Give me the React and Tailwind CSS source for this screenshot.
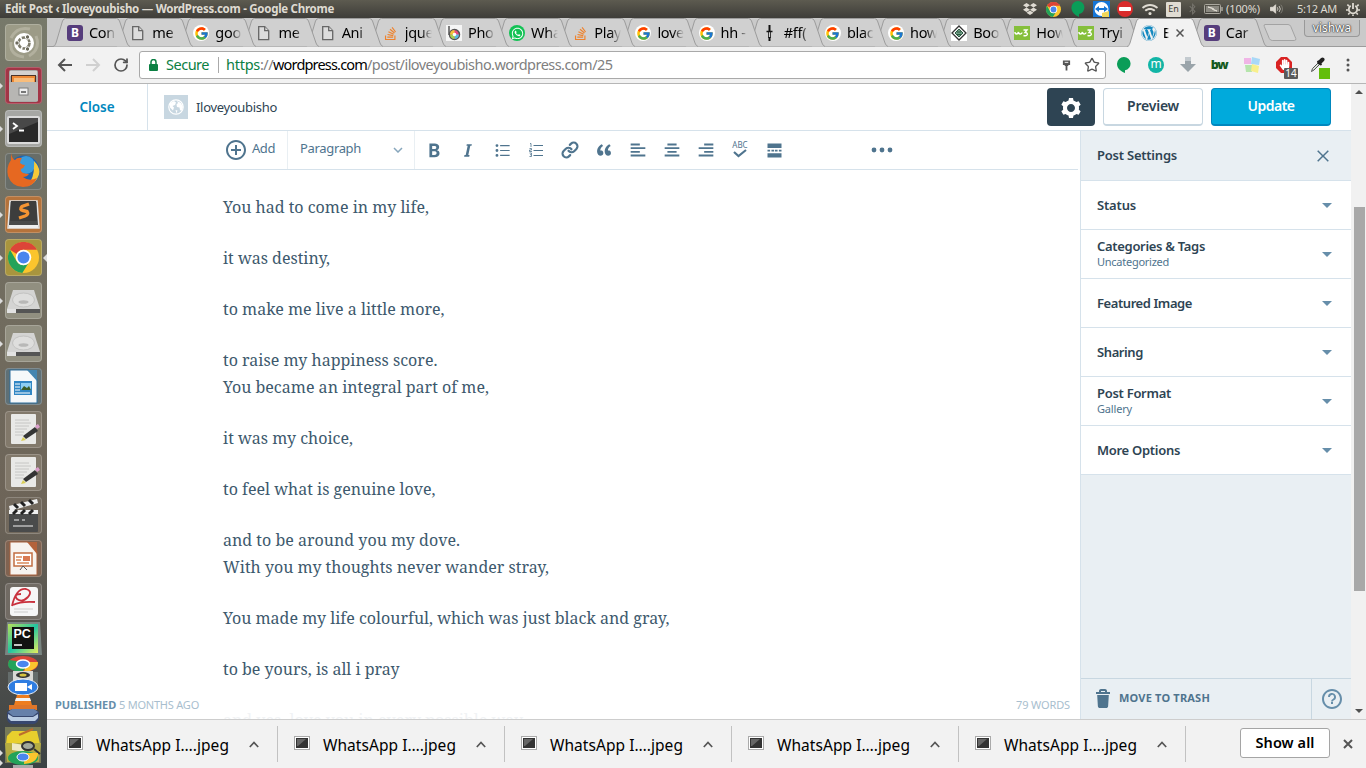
import React, { useLayoutEffect, useRef } from 'react';
import { FcGoogle } from 'react-icons/fc';
import { FaWhatsapp, FaWordpress, FaStackOverflow, FaDropbox, FaBluetoothB, FaHandPaper, FaWifi } from 'react-icons/fa';
import { Link, Star, RotateCw, Power } from 'lucide-react';

/* Text set to an exact advance width by adjusting its tracking. */
function Fit({ w, className = '', children }) {
  const ref = useRef(null);
  useLayoutEffect(() => {
    const el = ref.current;
    el.style.letterSpacing = '0px';
    const natural = el.getBoundingClientRect().width;
    el.style.letterSpacing = `${(w - natural) / el.textContent.length}px`;
  }, [w, children]);
  return (
    <span ref={ref} className={`inline-block shrink-0 whitespace-pre ${className}`}>
      {children}
    </span>
  );
}

function ChromeIcon({ className }) {
  return (
    <svg viewBox="0 0 32 32" className={className}>
      <circle cx="16" cy="16" r="16" fill="#fbc52d" />
      <path d="M2.1 8A16 16 0 0 1 29.900 8H16a8 8 0 0 0-7 4.500z" fill="#dc4438" />
      <path d="M2.1 8A16 16 0 0 0 14.800 32L21 22a8 8 0 0 1-12-2z" fill="#23a35a" />
      <circle cx="16" cy="16" r="8" fill="#fff" />
      <circle cx="16" cy="16" r="6.200" fill="#4a86ee" />
    </svg>
  );
}

/* ---------- system bar ---------- */

function SystemBar() {
  return (
    <div className="flex h-[18px] shrink-0 items-center bg-linear-to-b from-[#5d5b50] to-[#3e3d39] pl-[5px] text-[#dfdbd2]">
      <Fit w={329} className="text-[11.5px] leading-[18px] font-bold">Edit Post ‹ Iloveyoubisho — WordPress.com - Google Chrome</Fit>
      <div className="ml-auto flex h-full items-center">
        <FaDropbox className="h-[14px] w-[14px]" />
        <ChromeIcon className="ml-[9px] h-[15px] w-[15px]" />
        <svg viewBox="0 0 14 17" className="ml-[10px] h-[16px] w-[14px]"><path d="M7 0a7 7 0 0 1 1 13.900V17C3 15 0 11 0 7a7 7 0 0 1 7-7z" fill="#0a9d58" /></svg>
        <svg viewBox="0 0 17 16" className="ml-[8px] h-[16px] w-[17px]">
          <rect width="17" height="16" fill="#1676d6" />
          <circle cx="8.500" cy="8" r="7" fill="#fff" />
          <path d="M2 8l4-3v2h5V5l4 3-4 3V9H6v2z" fill="#1676d6" />
          <path d="M9 12l7-2v6H9z" fill="#f1d75a" />
        </svg>
        <svg viewBox="0 0 16 16" className="ml-[7px] h-[16px] w-[16px]"><circle cx="8" cy="8" r="8" fill="#d92b2b" /><rect x="2" y="6" width="12" height="4" rx="1" fill="#fff" /></svg>
        <FaWifi className="ml-[9px] h-[13px] w-[16px]" />
        <span className="ml-[8px] flex h-[15px] w-[15px] items-center justify-center rounded-[1px] bg-[#dfdbd2] text-[9px] text-[#3c3b37]">En</span>
        <FaBluetoothB className="ml-[7px] h-[12px] w-[9px] text-[#77756e]" />
        <svg viewBox="0 0 19 10" className="ml-[7px] h-[10px] w-[19px]" fill="none" stroke="#aaa79e">
          <rect x=".5" y=".5" width="16" height="9" rx="1" /><path d="M18 3v4" strokeWidth="1.500" /><rect x="2" y="2" width="13" height="6" fill="#8b8981" stroke="none" /><path d="M4 3l4.500 1.500v1L13 7 9.500 5.500v-1z" fill="#dfdbd2" stroke="#dfdbd2" />
        </svg>
        <Fit w={34} className="ml-[3px] text-[11px]">(100%)</Fit>
        <svg viewBox="0 0 16 14" className="ml-[9px] h-[12px] w-[15px]" fill="none" stroke="#dfdbd2">
          <path d="M1 5h3l3-3v10L4 9H1z" fill="#dfdbd2" /><path d="M9 5q1.500 2 0 4M11 3.500q3 3.500 0 7" /><path d="M13 2q4 5 0 10" stroke="#85837b" />
        </svg>
        <Fit w={40} className="ml-[13px] text-[11px]">5:12 AM</Fit>
        <svg viewBox="0 0 14 14" className="mr-[6px] ml-[9px] h-[14px] w-[14px]" fill="none" stroke="currentColor">
          <path d="M4.700 3.700a4.200 4.200 0 1 0 4.600 0" strokeWidth="1.800" />
          <path d="M7 1v6" strokeWidth="1.800" />
          <path d="M3 4L1.300 2.700M11 4l1.700-1.300M2 8H0M12 8h2M3.500 11l-1.300 1.500M10.500 11l1.300 1.500M7 12.500V14" strokeWidth="1.600" />
        </svg>
      </div>
    </div>
  );
}

/* ---------- launcher ---------- */

const launcherArt = {
  ubuntu: (
    <g>
      <path d="M6 14Q12 2 25 5M31 12q5 13-7 20M19 33Q4 31 6 18" fill="none" stroke="#c8c6b5" strokeWidth="3" opacity=".5" />
      <circle cx="19" cy="19" r="10" fill="#fff" />
      <circle cx="19" cy="19" r="5.500" fill="none" stroke="#7d7b6b" strokeWidth="2.600" strokeDasharray="10 1.500" />
      <g fill="#6d6b5d" stroke="#fff"><circle cx="12" cy="19" r="2.200" /><circle cx="22.500" cy="13" r="2.200" /><circle cx="22.500" cy="25" r="2.200" /></g>
    </g>
  ),
  files: (
    <g>
      <rect x="4" y="3" width="29" height="32" rx="2" fill="#aaa9a6" />
      <rect x="5" y="4" width="27" height="5" fill="#d4d2cf" />
      <rect x="6" y="8" width="25" height="7" fill="#4c3428" />
      <rect x="7" y="9" width="23" height="6" fill="#ed8a36" />
      <rect x="9" y="11" width="20" height="4" fill="#f8bd7b" />
      <rect x="4" y="15" width="29" height="19" rx="1" fill="#b7b6b3" />
      <rect x="14" y="21" width="9" height="7" fill="#eee" stroke="#7c7c7c" />
      <path d="M16 25h5" stroke="#777" strokeWidth="2" />
    </g>
  ),
  terminal: (
    <g>
      <rect x="2" y="6" width="33" height="28" rx="2" fill="#dadada" />
      <rect x="4" y="8" width="29" height="24" fill="#292929" />
      <path d="M4 8h29v4L4 24z" fill="#555" opacity=".7" />
      <path d="M8 13l4 3-4 3M14 20.500h5" stroke="#fff" strokeWidth="1.800" fill="none" />
    </g>
  ),
  firefox: (
    <g>
      <circle cx="19" cy="18" r="15.500" fill="#1f63ad" />
      <circle cx="21" cy="12" r="9" fill="#3a9bdc" />
      <path d="M29 8q9 9 3 18-4 6-10 7 8-7 7-25z" fill="#f7c938" />
      <path d="M6 7q-5 7-3 16 4 11 15 11 10 0 14-9-8 4-14-1 4 0 6-3-3 0-6-1-3-2-2-4 3-1 4-4-3 0-5-2 0-3 2-5-5-1-7 2-3-1-4-7z" fill="#e66821" />
    </g>
  ),
  sublime: (
    <g>
      <path d="M5 5h27l2 27H3z" fill="#4a4a4a" stroke="#e5e5e5" strokeWidth="1.500" />
      <path d="M6 5h25l1 20H5z" fill="#3d3d3d" />
      <path d="M24 8l-7 2.500q-3 3 1 4l4 1q2 3-2 4.500l-6 2" fill="none" stroke="#f49433" strokeWidth="3.400" />
      <path d="M4 29h29v3H4z" fill="#eee" />
    </g>
  ),
  disk: (
    <g>
      <path d="M8 8h21l6 19H2z" fill="#d4d4d3" />
      <path d="M2 27h33v4H2z" fill="#555" />
      <path d="M2 27h9v4H2z" fill="#e2e2e2" />
      <ellipse cx="18.500" cy="18" rx="11" ry="7" fill="#dededd" stroke="#c2c2c1" />
      <ellipse cx="18.500" cy="20" rx="5" ry="1.800" fill="#b8b8b7" />
    </g>
  ),
  writer: (
    <g>
      <path d="M5 2h19l8 9v24H5z" fill="#f6f8fa" stroke="#2e6e9d" />
      <path d="M22 2h10v11z" fill="#4485b0" />
      <rect x="9" y="13" width="18" height="14" fill="#3186c4" />
      <rect x="16" y="15" width="10" height="7" fill="#8dcef3" /><path d="M16 22l3-4 3 2 2-2 2 4z" fill="#3b5d28" />
      <path d="M10 16h5M10 19h5M10 22h5M10 25h15" stroke="#fff" />
    </g>
  ),
  editor: (
    <g>
      <rect x="6" y="3" width="25" height="30" rx="1" fill="#e9e9e7" />
      <path d="M10 9h14M10 12h16M10 15h14M10 18h12M10 21h9M10 24h8" stroke="#c6c6c4" />
      <path d="M18 25l12-9 3 4-12 8z" fill="#343434" /><path d="M30 15l3-2 2 3-3 2z" fill="#db9ecb" /><path d="M16 30l2-4 3 3z" fill="#d9ce55" />
    </g>
  ),
  video: (
    <g>
      <rect x="4" y="15" width="29" height="20" rx="1" fill="#4a4b4b" />
      <path d="M4 9l28-7 1 4-28 8z" fill="#eee" /><path d="M9 7l4 4M16 5l4 4M24 3l4 4" stroke="#222" strokeWidth="3" />
      <path d="M4 13h29v4H4z" fill="#eee" /><path d="M8 17l4-4M16 17l4-4M24 17l4-4" stroke="#222" strokeWidth="3" />
      <path d="M9 23h5M17 23h3M8 29h20" stroke="#bbb" strokeWidth="1.500" />
    </g>
  ),
  impress: (
    <g>
      <path d="M5 2h18l9 9v24H5z" fill="#f7f3ef" stroke="#a9603c" />
      <path d="M22 2h10v12z" fill="#b4623b" />
      <rect x="9" y="13" width="18" height="13" fill="#fff" stroke="#c26d42" strokeWidth="1.500" />
      <path d="M11 17h6M11 20h5M12 23h12" stroke="#d98b5c" strokeWidth="1.500" /><rect x="18" y="16" width="7" height="5" fill="#d97a52" /><path d="M15 30l3-4 4 4" stroke="#555" fill="none" />
    </g>
  ),
  reader: (
    <g>
      <rect x="5" y="4" width="28" height="29" rx="3" fill="#f6f6f6" />
      <path d="M7 23Q11 5 21 6q7 2 2 8-6 6-11 2-4-5 4-5M8 22q8-4 22-3" fill="none" stroke="#c9313d" strokeWidth="1.800" />
      <path d="M9 26h19M9 29h14" stroke="#ccc" />
    </g>
  ),
};

function Tile({ art, className, marks = '', children }) {
  return (
    <div className={`relative ml-[5px] h-[37px] w-[37px] shrink-0 rounded-[4px] border border-white/20 ${className}`}>
      {art && <svg viewBox="0 0 37 37" className="-m-px h-[37px] w-[37px]">{launcherArt[art]}</svg>}
      {children}
      {marks.includes('l') && <i className="absolute top-[15px] -left-[6px] border-y-3 border-l-3 border-y-transparent border-l-[#ddd]" />}
      {marks.includes('r') && <i className="absolute top-[14px] -right-[6px] border-y-4 border-r-4 border-y-transparent border-r-[#ddd]" />}
    </div>
  );
}

function Launcher() {
  return (
    <div className="flex w-[47px] shrink-0 flex-col overflow-hidden bg-linear-to-b from-[#77796a] via-[#6d6458] via-65% to-[#3b4244] pt-[6px]">
      <div className="flex flex-col gap-[6px]">
        <Tile art="ubuntu" className="bg-[#9c9b87]" />
        <Tile art="files" className="bg-[#a23546]" marks="l" />
        <Tile art="terminal" className="bg-[#a6a7a4]" marks="l" />
        <Tile art="firefox" className="bg-[#686d68]" />
        <Tile art="sublime" className="bg-[#b5733b]" marks="l" />
        <Tile className="bg-[#a9953e]" marks="lr"><ChromeIcon className="m-[2px] h-[31px] w-[31px]" /></Tile>
        <Tile art="disk" className="bg-[#918f80]" marks="l" />
        <Tile art="disk" className="bg-[#918f80]" marks="l" />
        <Tile art="writer" className="bg-[#5f7076]" />
        <Tile art="editor" className="bg-[#82796b]" />
        <Tile art="editor" className="bg-[#82796b]" />
        <Tile art="video" className="bg-[#72695d]" />
        <Tile art="impress" className="bg-[#806351]" />
        <Tile art="reader" className="bg-[#716b64]" />
      </div>
      <svg viewBox="0 0 47 148" className="h-[148px] w-[47px] shrink-0">
        <defs>
          <linearGradient id="pc" x1="0" y1="0" x2="1" y2="1"><stop offset="0" stopColor="#b8e05a" /><stop offset=".5" stopColor="#21c5a2" /><stop offset="1" stopColor="#e8ee5b" /></linearGradient>
        </defs>
        <path d="M7 2h33l2 33H5z" fill="#798581" />
        <path d="M8 4h30v29H8z" fill="url(#pc)" />
        <path d="M12 7h22v22H12z" fill="#111" />
        <text x="13.500" y="18" fontSize="12.500" fontWeight="700" fill="#fff" fontFamily="Liberation Sans, sans-serif">PC</text>
        <path d="M14 25h8" stroke="#fff" strokeWidth="1.500" />
        <ellipse cx="23" cy="44" rx="15" ry="8" fill="#dc4438" />
        <path d="M8 44q0 7 14 8l6-7-12-4-7-1z" fill="#23a35a" /><path d="M27 42h11q0 8-14 10z" fill="#fbc52d" />
        <ellipse cx="23" cy="44" rx="6.500" ry="4" fill="#4a86ee" stroke="#fff" strokeWidth="1.500" />
        <path d="M8 52h30v12H8z" fill="#656d6c" /><path d="M13 51h20v13H13z" fill="#d8d8d4" /><ellipse cx="23" cy="55" rx="7" ry="3" fill="#333" /><ellipse cx="23" cy="55" rx="3.500" ry="1.500" fill="#d6c33f" />
        <ellipse cx="23" cy="67" rx="15" ry="8" fill="#2f7de1" stroke="#eee" /><path d="M15 63h12v8H15zM27 67l5-3v6z" fill="#fff" />
        <path d="M17 75h12l3 10H14z" fill="#ee7d1f" /><path d="M16 78h14l1 3H15z" fill="#f4f4f4" />
        <path d="M9 85h28v5H9z" fill="#df762a" /><path d="M7 92l5-3h22l5 3v6q-1 5-5 6H12q-5-1-5-6z" fill="#37476f" /><path d="M8 92l4-3h22l4 3-5 4H13z" fill="#6680aa" /><path d="M8 94l5 3h20l5-3v4l-3 3H11l-3-3z" fill="#b9cbe2" />
        <path d="M5 107h36v36H5z" fill="#777a58" />
        <path d="M7 116l5-5h25l3 13H6z" fill="#e8cf2d" /><path d="M19 115l14-6" stroke="#bd6d2d" strokeWidth="2" />
        <path d="M5 123h36l-2 19H7z" fill="#b5ac42" /><path d="M12 123l12 2v7l-12-2z" fill="#eee9c5" /><ellipse cx="28" cy="126" rx="6" ry="4" fill="#a2a89a" stroke="#333" strokeWidth="2" /><path d="M34 129l6 5" stroke="#333" strokeWidth="2" />
        <ellipse cx="23" cy="138" rx="15" ry="7" fill="#23a35a" /><path d="M25 133h13q0 10-14 11z" fill="#fbc52d" /><ellipse cx="23" cy="137" rx="6" ry="4" fill="#4a86ee" stroke="#fff" />
        <path d="M13 145h20v4H13z" fill="#aaa" /><path d="M0 130l3 3-3 3zM0 140l3 3-3 3z" fill="#ddd" />
      </svg>
    </div>
  );
}

/* ---------- browser chrome ---------- */

const Google = () => <span className="flex h-4 w-4 items-center justify-center rounded-full bg-white"><FcGoogle size={15} /></span>;
const Page = () => (
  <svg viewBox="0 0 16 16" className="h-4 w-4" fill="#dcdcdc" stroke="#666" strokeWidth="1.300"><path d="M2.700 1.700h6l4 4v9h-10z" /><path d="M8.700 1.700v4h4" /></svg>
);
const Stack = () => <FaStackOverflow size={15} color="#ee822d" />;
const Bootstrap = () => <span className="flex h-4 w-4 items-center justify-center rounded-[3px] bg-[#563d7c] text-[12px] leading-none font-bold text-white">B</span>;
const W3 = () => (
  <svg viewBox="0 0 16 16" className="h-4 w-4"><rect width="16" height="14" y="1" fill="#85bf3b" /><path d="M1 7q0 2 1.500 2T4.500 7q0 2 1.700 2T8 7.500M9.500 5h3.500l-2 2.500q2.500 0 2.300 2-.8 2-3.800 1" fill="none" stroke="#fff" strokeWidth="1.400" /></svg>
);
const Photo = () => (
  <svg viewBox="0 0 16 16" className="h-4 w-4"><rect width="16" height="16" fill="#f5f5f5" /><path d="M3 1v9" stroke="#555" strokeWidth="1.500" /><circle cx="8.500" cy="9.500" r="5" fill="#e94a7d" stroke="#555" strokeWidth="1.500" /><path d="M8.500 9.500V5A4.500 4.500 0 0 0 4 9.500z" fill="#f4c33b" /><path d="M8.500 9.500H13A4.500 4.500 0 0 1 8.500 14z" fill="#55bce0" /><path d="M8.500 9.500H4A4.500 4.500 0 0 0 8.500 14z" fill="#a6d14e" /><circle cx="8.500" cy="9.500" r="1.800" fill="#fff" /></svg>
);
const Dagger = () => <svg viewBox="0 0 16 16" className="h-4 w-4" stroke="#111"><path d="M7.500 0v7" strokeWidth="2" /><path d="M4.500 6.500h6" strokeWidth="1.500" /><path d="M6.500 7v6M8.500 7v6" strokeWidth=".8" /><path d="M7.500 12v4" strokeWidth="2" /></svg>;
const Knot = () => <svg viewBox="0 0 16 16" className="h-4 w-4"><rect width="16" height="16" fill="#fff" /><path d="M8 1l7 7-7 7-7-7z" fill="none" stroke="#333" strokeWidth="1.300" /><path d="M8 4l4 4-4 4-4-4z" fill="#6f9d84" stroke="#2c5a42" /><path d="M6 7h4M6 9.500h4" stroke="#2c5a42" /></svg>;
const Wa = () => <span className="flex h-4 w-4 items-center justify-center rounded-full bg-[#12c254]"><FaWhatsapp size={13} color="#fff" /></span>;
const Wp = () => <FaWordpress size={16} color="#1489c0" />;

const tabs = [
  [Bootstrap, 'Con'], [Page, 'me'], [Google, 'goo'], [Page, 'me'], [Page, 'Ani'], [Stack, 'jque'],
  [Photo, 'Pho'], [Wa, 'Wha'], [Stack, 'Play'], [Google, 'love'], [Google, 'hh -'], [Dagger, '#ff('],
  [Google, 'blac'], [Google, 'how'], [Knot, 'Boo'], [W3, 'How'], [W3, 'Tryi'], [Wp, 'E', true], [Bootstrap, 'Car'],
];

function TabStrip() {
  return (
    <div className="relative isolate flex h-[29px] shrink-0 items-start border-b border-[#9c9c9c] bg-[#cacaca] pl-[20px]">
      {tabs.map(([Icon, title, active], i) => (
        <div
          key={i}
          className="relative flex h-[28px] w-[63.170px] shrink-0 items-center pt-[2px]"
          style={{ zIndex: active ? 40 : 30 - i }}
        >
          <svg viewBox="0 0 78 29" className="absolute top-0 -left-[14px] h-[29px] w-[78px]">
            <path d="M0 28.500C2 28 2 27 3 25L9.500 3q1-2.500 3-2.500h51q2 0 3 2.500L74 25q1 3 3 3.500" fill={active ? '#f2f2f2' : '#d0d0d0'} stroke="#9c9c9c" />
            {active && <path d="M2 28.500h74" stroke="#f2f2f2" />}
          </svg>
          <span className="relative flex w-4 shrink-0 justify-center"><Icon /></span>
          <span className={`relative mb-[2px] ml-[6px] overflow-hidden mask-r-from-60% text-[14.500px] leading-5 tracking-[-0.300px] whitespace-nowrap text-black ${active ? 'w-[6px]' : 'w-[27px]'}`}>{title}</span>
          {active && (
            <svg viewBox="0 0 8 8" className="relative ml-[7px] h-[8px] w-[8px]"><path d="M.5.500l7 7M7.500.500l-7 7" stroke="#555" strokeWidth="1.500" /></svg>
          )}
        </div>
      ))}
      <svg viewBox="0 0 36 18" className="mt-[6px] ml-[-5px] h-[18px] w-[36px]"><path d="M3 .500h23q2 0 2.800 2l5 12q.5 2-1.500 2h-22q-2 0-3-2l-5-12q-.8-2 .7-2z" fill="#d2d2d2" stroke="#a3a3a3" /></svg>
      <span className="mt-[2px] ml-[6px] flex h-[17px] w-[56px] items-center justify-center rounded-b-[4px] border border-t-0 border-[#999] bg-[#c4c4c4] text-[12px] text-white [text-shadow:0_0_1px_#333,0_0_1px_#333,0_0_2px_#333]">vishwa</span>
    </div>
  );
}

function AddressBar() {
  return (
    <div className="flex h-[37px] shrink-0 items-center border-b border-[#b6b6b6] bg-[#f2f2f2] pl-[10px]">
      <svg viewBox="0 0 16 14" className="h-[14px] w-[16px]" fill="none" stroke="#555" strokeWidth="2"><path d="M15 7H2M8 1L2 7l6 6" /></svg>
      <svg viewBox="0 0 16 14" className="ml-[12px] h-[14px] w-[16px]" fill="none" stroke="#d0d0d0" strokeWidth="2"><path d="M1 7h13M8 1l6 6-6 6" /></svg>
      <RotateCw className="ml-[12px] h-4 w-4" color="#555" strokeWidth={2.600} />
      <div className="ml-[10px] flex h-[28px] w-[967px] shrink-0 items-center rounded-[3px] border border-[#a9a9a9] bg-white pl-[9px] text-[14.500px]">
        <svg viewBox="0 0 9 12" className="h-[12px] w-[9px]"><rect y="5" width="9" height="7" rx="1" fill="#0b8043" /><path d="M2 5V3a2.500 2.500 0 0 1 5 0v2" fill="none" stroke="#0b8043" strokeWidth="1.500" /></svg>
        <Fit w={43} className="ml-[8px] text-[#0b8043]">Secure</Fit>
        <span className="ml-[9px] h-4 w-px bg-[#aaa]" />
        <span className="ml-[7px] flex">
          <Fit w={34} className="text-[#0b8043]">https</Fit>
          <Fit w={13} className="text-[#808080]">://</Fit>
          <Fit w={94} className="text-black">wordpress.com</Fit>
          <Fit w={245.500} className="text-[#808080]">/post/iloveyoubisho.wordpress.com/25</Fit>
        </span>
        <svg viewBox="0 0 10 13" className="ml-auto h-[13px] w-[9px]" fill="#555"><path d="M1 1h8v5H7v1H6v5H4V7H3V6H1z" /><path d="M3 3h4" stroke="#fff" /></svg>
        <Star className="mr-[5px] ml-[13px] h-[16px] w-[16px]" color="#555" strokeWidth={2} />
      </div>
      <div className="ml-[11px] flex items-center">
        <svg viewBox="0 0 14 16" className="h-4 w-[14px]"><path d="M7 0a6.700 6.700 0 0 1 1 13.300V16C3 14 0 11 0 6.800A6.900 6.900 0 0 1 7 0z" fill="#0a9d58" /></svg>
        <span className="ml-[17px] flex h-4 w-4 items-center justify-center rounded-full bg-[#12b5a6] pb-[2px] text-[12px] leading-none text-white">m</span>
        <svg viewBox="0 0 16 16" className="ml-[16px] h-4 w-4"><path d="M5 0h6v7h5l-8 8-8-8h5z" fill="#9aa4aa" /><path d="M5 0h6v4H5z" fill="#c3cacf" /></svg>
        <span className="ml-[15px] flex h-4 w-4 items-center justify-center text-[12.500px] font-black tracking-[-1.300px] text-[#145a1e]">bw</span>
        <svg viewBox="0 0 16 16" className="ml-[17px] h-4 w-4"><path d="M0 1h7v6H0z" fill="#f0b5e6" /><path d="M8 0l8 2-1 6-8-1z" fill="#a9d8f7" /><path d="M1 8h7v7H2z" fill="#b6e5ac" /><path d="M8 7l7 2-1 7-7-2z" fill="#f8ef8b" /></svg>
        <div className="relative ml-[16px] h-4 w-4">
          <svg viewBox="0 0 16 16" className="h-4 w-4"><path d="M5 0h6l5 5v6l-5 5H5l-5-5V5z" fill="#d92323" /></svg>
          <FaHandPaper size={11} color="#fff" className="absolute top-[2px] left-[3px]" />
          <span className="absolute top-[11px] left-[8px] h-[11px] w-[14px] rounded-[1px] bg-[#5b5b5b] text-center text-[10px] leading-[11px] text-white">14</span>
        </div>
        <svg viewBox="0 0 20 22" className="mt-[6px] ml-[18px] h-[22px] w-[20px]"><path d="M1.500 14.500l1-3 6-6 1.500 1.500-6 6z" fill="#d8e0d8" stroke="#555" /><path d="M7.500 4l4 4" stroke="#222" strokeWidth="1.800" /><path d="M9.500 5.500l3-3" stroke="#222" strokeWidth="4" strokeLinecap="round" /><rect x="9" y="11" width="11" height="11" fill="#63be0b" /></svg>
        <svg viewBox="0 0 4 14" className="ml-[16px] h-[14px] w-[4px]" fill="#555"><circle cx="2" cy="2" r="1.500" /><circle cx="2" cy="7" r="1.500" /><circle cx="2" cy="12" r="1.500" /></svg>
      </div>
    </div>
  );
}

/* ---------- editor ---------- */

const glyphs = {
  cog: 'M20 12c0-.568-.06-1.122-.174-1.656l1.834-1.612-2-3.464-2.322.786c-.82-.736-1.787-1.308-2.860-1.657L14 2h-4l-.48 2.396c-1.070.350-2.040.920-2.858 1.657L4.340 5.268l-2 3.464 1.834 1.612C4.060 10.878 4 11.432 4 12s.06 1.122.174 1.656L2.340 15.268l2 3.464 2.322-.786c.82.736 1.787 1.308 2.860 1.657L10 22h4l.48-2.396c1.070-.350 2.038-.920 2.858-1.657l2.322.786 2-3.464-1.834-1.613c.113-.535.174-1.090.174-1.656zm-8 4c-2.210 0-4-1.790-4-4s1.790-4 4-4 4 1.790 4 4-1.790 4-4 4z',
  add: 'M12 4c4.410 0 8 3.590 8 8s-3.590 8-8 8-8-3.590-8-8 3.590-8 8-8m0-2C6.477 2 2 6.477 2 12s4.477 10 10 10 10-4.477 10-10S17.523 2 12 2zm5 9h-4V7h-2v4H7v2h4v4h2v-4h4v-2z',
  bold: 'M7 5.010h4.547c2.126 0 3.670.302 4.632.906.960.605 1.440 1.567 1.440 2.887 0 .896-.210 1.630-.630 2.205-.420.574-.980.920-1.678 1.036v.103c.950.212 1.637.608 2.057 1.190.420.580.630 1.350.630 2.315 0 1.367-.494 2.434-1.482 3.200-.990.765-2.332 1.148-4.027 1.148H7V5.010zm3 5.936h2.027c.862 0 1.486-.133 1.872-.4.386-.267.578-.708.578-1.323 0-.574-.210-.986-.630-1.236-.420-.250-1.087-.374-1.996-.374H10v3.333zm0 2.523v3.905h2.253c.876 0 1.520-.167 1.940-.502.416-.335.625-.848.625-1.540 0-1.243-.890-1.864-2.668-1.864H10z',
  italic: 'M10.536 5l-.427 2h1.500L9.262 18h-1.500l-.427 2h6.128l.426-2h-1.500l2.347-11h1.500l.427-2',
  ul: 'M9 19h12v-1.500H9V19zm0-6.250h12v-1.500H9v1.500zM9 5v1.500h12V5H9zM5 4a1.800 1.800 0 1 0 0 3.600A1.800 1.800 0 1 0 5 4zm0 6.200a1.800 1.800 0 1 0 0 3.600 1.800 1.800 0 1 0 0-3.600zm0 6.200a1.800 1.800 0 1 0 0 3.600 1.800 1.800 0 1 0 0-3.600z',
  quote: 'M11.192 15.757c0-.880-.230-1.618-.690-2.217-.326-.412-.768-.683-1.327-.812-.550-.128-1.070-.137-1.540-.028-.160-.950.100-1.956.760-3.022.660-1.065 1.515-1.867 2.558-2.403L9.373 5c-.8.396-1.560.898-2.260 1.505-.710.607-1.340 1.305-1.900 2.094s-.980 1.680-1.250 2.690-.346 2.040-.217 3.100c.168 1.400.620 2.520 1.356 3.350.735.840 1.652 1.260 2.748 1.260.965 0 1.766-.290 2.400-.880.628-.576.940-1.365.940-2.368zm9.124 0c0-.880-.230-1.618-.690-2.217-.326-.420-.770-.692-1.327-.817-.560-.124-1.073-.130-1.540-.022-.160-.940.090-1.950.752-3.020.660-1.060 1.513-1.860 2.556-2.400L18.490 5c-.8.396-1.555.898-2.260 1.505-.708.607-1.340 1.305-1.894 2.094-.556.790-.970 1.680-1.240 2.690-.273 1-.345 2.040-.217 3.100.165 1.400.615 2.520 1.350 3.350.732.840 1.646 1.260 2.740 1.260.967 0 1.770-.290 2.403-.880.636-.580.950-1.370.950-2.367z',
  left: 'M4 19h16v-2H4v2zm10-6H4v2h10v-2zM4 9v2h16V9H4zm10-4H4v2h10V5z',
  center: 'M4 19h16v-2H4v2zm13-6H7v2h10v-2zM4 9v2h16V9H4zm13-4H7v2h10V5z',
  right: 'M20 17H4v2h16v-2zm-10-2h10v-2H10v2zM4 9v2h16V9H4zm6-2h10V5H10v2z',
  more: 'M4 4h16v5H4zM4 11h3v2H4zM8.500 11h3v2h-3zM12.500 11h3v2h-3zM17 11h3v2h-3zM4 15h16v5H4z',
  trash: 'M6.187 8h11.625l-.695 11.125C17.050 20.180 16.177 21 15.120 21H8.880c-1.057 0-1.930-.820-1.997-1.875L6.187 8zM19 5v2H5V5h3V4c0-1.105.895-2 2-2h4c1.105 0 2 .895 2 2v1h3zm-9 0h4V4h-4v1z',
  help: 'M12 4c4.410 0 8 3.590 8 8s-3.590 8-8 8-8-3.590-8-8 3.590-8 8-8m0-2C6.477 2 2 6.477 2 12s4.477 10 10 10 10-4.477 10-10S17.523 2 12 2zm1 13h-2v2h2v-2z',
  close: 'M18.360 19.780L12 13.410l-6.360 6.370-1.420-1.420L10.590 12 4.220 5.640l1.420-1.420L12 10.590l6.360-6.360 1.410 1.410L13.410 12l6.360 6.360z',
};

const Glyph = ({ name, className = '' }) => (
  <svg viewBox="0 0 24 24" className={`shrink-0 ${className}`} fill="currentColor"><path d={glyphs[name]} /></svg>
);

const Tool = ({ children }) => <span className="flex w-[34px] shrink-0 items-center justify-center">{children}</span>;

function EditorHeader() {
  return (
    <div className="flex h-[47px] shrink-0 items-center border-b border-[#d6e2eb]">
      <div className="flex h-full w-[101px] items-center justify-center border-r border-[#d6e2eb]">
        <Fit w={35} className="text-[13.500px] font-semibold text-[#0087be]">Close</Fit>
      </div>
      <div className="ml-4 flex h-6 w-6 items-center justify-center bg-[#c8d7e1]">
        <svg viewBox="0 0 16 16" className="h-4 w-4"><circle cx="8" cy="8" r="7.200" fill="none" stroke="#fff" strokeWidth="1.200" /><path d="M2 4l4-2 2 1.500L7 6 4.500 7 6 8.500l-1 3-3-3zM9 2l4 2 2 4-1.500 4-1.500-1-.5-2.500L9 8 8.500 5.500 10 4zM7.500 11l2 .5-1 3z" fill="#fff" /></svg>
      </div>
      <Fit w={81} className="mt-[2px] ml-2 text-[13px] text-[#2e4453]">Iloveyoubisho</Fit>
      <div className="mr-[20px] ml-auto flex gap-2">
        <button className="flex h-[38px] w-[48px] items-center justify-center rounded-[4px] bg-[#2e4453] pt-[2px] text-white"><Glyph name="cog" className="h-6 w-6" /></button>
        <button className="h-[38px] w-[100px] rounded-[4px] border border-b-2 border-[#c8d7e1] bg-white pb-[3px] text-[#2e4453]"><Fit w={52} className="text-[14px] font-semibold">Preview</Fit></button>
        <button className="h-[38px] w-[120px] rounded-[4px] border border-b-2 border-[#0087be] bg-[#00aadc] pb-[3px] text-white"><Fit w={47} className="text-[14px] font-semibold">Update</Fit></button>
      </div>
    </div>
  );
}

function FormatBar() {
  return (
    <div className="mr-[2px] flex h-[39px] shrink-0 border-b border-[#d6e2eb] text-[#4f748e]">
      <div className="flex w-[241px] items-center border-r border-[#e9eff3] pl-[177px]">
        <Glyph name="add" className="h-6 w-6" />
        <Fit w={23} className="mb-[2px] ml-1 text-[13px]">Add</Fit>
      </div>
      <div className="flex w-[127px] items-center border-r border-[#e9eff3] pl-3">
        <Fit w={61} className="mb-[2px] text-[13px]">Paragraph</Fit>
        <svg viewBox="0 0 10 6" className="ml-[32px] h-[6px] w-[10px]" fill="none" stroke="#87a6bc" strokeWidth="1.500"><path d="M1 1l4 4 4-4" /></svg>
      </div>
      <div className="flex pl-[2px]">
        <Tool><Glyph name="bold" className="h-[22px] w-[22px]" /></Tool>
        <Tool><Glyph name="italic" className="h-[20px] w-[22px]" /></Tool>
        <Tool><Glyph name="ul" className="h-[19px] w-[19px]" /></Tool>
        <Tool>
          <svg viewBox="0 0 14 14" className="h-[14px] w-[14px]" fill="none" stroke="currentColor"><path d="M4.500 2.500H14M4.500 7.500H14M4.500 12.500H14" /><path d="M1 .500h1V4M.5 5.500h2v1.500h-2v1.500h2.500M.5 10h2v3.500h-2M1 11.700h1" strokeWidth=".8" /></svg>
        </Tool>
        <Tool><Link className="h-[18px] w-[18px]" strokeWidth={2.900} /></Tool>
        <Tool><Glyph name="quote" className="h-[20px] w-[20px]" /></Tool>
        <Tool><Glyph name="left" className="h-[22px] w-[22px]" /></Tool>
        <Tool><Glyph name="center" className="h-[22px] w-[22px]" /></Tool>
        <Tool><Glyph name="right" className="h-[22px] w-[22px]" /></Tool>
        <Tool>
          <span className="mb-[2px] flex flex-col items-center"><span className="text-[8px] leading-[8px]">ABC</span><svg viewBox="0 0 14 9" className="h-[9px] w-[14px]" fill="none" stroke="currentColor" strokeWidth="2.200"><path d="M1 3l4.500 4L13 1" /></svg></span>
        </Tool>
        <Tool><Glyph name="more" className="h-[21px] w-[21px]" /></Tool>
      </div>
      <svg viewBox="0 0 22 6" className="mt-[16px] ml-[80px] h-[6px] w-[22px]" fill="currentColor"><circle cx="3" cy="3" r="2.400" /><circle cx="11" cy="3" r="2.400" /><circle cx="19" cy="3" r="2.400" /></svg>
    </div>
  );
}

const stanzas = [
  [['You had to come in my life,', 206]],
  [['it was destiny,', 107]],
  [['to make me live a little more,', 221.500]],
  [['to raise my happiness score.', 214.500], ['You became an integral part of me,', 266]],
  [['it was my choice,', 130]],
  [['to feel what is genuine love,', 212.500]],
  [['and to be around you my dove.', 237], ['With you my thoughts never wander stray,', 326]],
  [['You made my life colourful, which was just black and gray,', 446.500]],
  [['to be yours, is all i pray', 176.500]],
];

function Post() {
  return (
    <div className="relative min-h-0 flex-1 overflow-hidden">
      <div className="flex flex-col gap-6 pt-[24px] pl-[176px] font-['Noto_Serif','DejaVu_Serif_Condensed','DejaVu_Serif',serif] text-[16px] leading-[27px] text-[#3d596d]">
        {stanzas.map((lines, i) => (
          <p key={i} className="flex flex-col items-start">
            {lines.map(([text, w]) => <Fit key={text} w={w}>{text}</Fit>)}
          </p>
        ))}
        <p className="text-[#f1f3f5]"><Fit w={300}>and yes, love you in every possible way</Fit></p>
      </div>
      <div className="absolute inset-x-0 bottom-0 flex h-[27px] items-center justify-between pr-[10px] pl-2 text-[11px] text-[#a8bece]">
        <span className="flex"><Fit w={64} className="font-bold text-[#668eaa]">PUBLISHED </Fit><Fit w={80}>5 MONTHS AGO</Fit></span>
        <Fit w={54}>79 WORDS</Fit>
      </div>
    </div>
  );
}

const sections = [
  ['Status', 39], ['Categories & Tags', 108, 'Uncategorized', 72], ['Featured Image', 95],
  ['Sharing', 46], ['Post Format', 74, 'Gallery', 35], ['More Options', 83],
];

function Settings() {
  return (
    <aside className="flex w-[271px] shrink-0 flex-col border-l border-[#d6e2eb] bg-[#e9eff3] text-[13px] font-semibold text-[#2e4453]">
      <div className="flex h-[50px] items-center justify-between border-b border-[#d6e2eb] pt-px pr-[19px] pl-4">
        <Fit w={80}>Post Settings</Fit>
        <Glyph name="close" className="h-[18px] w-[18px] text-[#4f748e]" />
      </div>
      {sections.map(([title, w, sub, sw]) => (
        <div key={title} className="flex h-[49px] items-center justify-between border-b border-[#d6e2eb] bg-white pr-[19px] pl-4">
          <div className={`flex flex-col items-start ${sub ? 'mb-[2px]' : ''}`}>
            <Fit w={w} className="leading-[17px]">{title}</Fit>
            {sub && <Fit w={sw} className="text-[11px] leading-[14px] font-normal text-[#4f748e]">{sub}</Fit>}
          </div>
          <i className="border-x-5 border-t-5 border-x-transparent border-t-[#668eaa]" />
        </div>
      ))}
      <div className="mt-auto flex h-[41px] border-t border-[#c8d7e1] text-[#4f748e]">
        <div className="flex flex-1 items-center border-r border-[#c8d7e1] pl-[10px]">
          <Glyph name="trash" className="h-[24px] w-[24px]" />
          <Fit w={91} className="mb-[2px] ml-[4px] text-[11px] font-bold">MOVE TO TRASH</Fit>
        </div>
        <div className="flex w-[39px] items-center justify-center text-[#668eaa]">
          <svg viewBox="0 0 24 24" className="h-6 w-6"><path d={glyphs.help} fill="currentColor" /><path d="M9 10a3 3 0 1 1 4.500 2.500Q12 13.300 12 14.500" fill="none" stroke="currentColor" strokeWidth="1.900" /></svg>
        </div>
      </div>
    </aside>
  );
}

function Scrollbar() {
  return (
    <div className="flex w-[15px] shrink-0 flex-col items-center bg-[#f1f1f1]">
      <i className="mt-[6px] border-x-4 border-b-4 border-x-transparent border-b-[#505050]" />
      <div className="mt-[113px] ml-px h-[384px] w-[11px] bg-[#a8a8a8]" />
      <i className="mt-auto mb-[6px] border-x-4 border-t-4 border-x-transparent border-t-[#505050]" />
    </div>
  );
}

function Downloads() {
  return (
    <div className="flex h-[49px] shrink-0 items-center border-t border-[#cdcdcd] bg-[#f2f2f2]">
      {[0, 1, 2, 3, 4].map((i) => (
        <div key={i} className={`flex h-[36px] shrink-0 items-center border-r border-[#c2c2c2] ${i === 0 ? 'w-[231px] pl-5' : 'w-[227px] pl-4'}`}>
          <svg viewBox="0 0 16 14" className="mb-[2px] h-[14px] w-[16px]"><rect x=".5" y=".5" width="15" height="13" fill="#fff" stroke="#aaa" /><rect x="2" y="2" width="12" height="10" fill="#333" /><path d="M3 3h9L4 10H3z" fill="#666" /></svg>
          <Fit w={133} className="mt-[3px] ml-[13px] text-[15.500px] text-black">WhatsApp I….jpeg</Fit>
          <svg viewBox="0 0 10 7" className="ml-[20px] h-[7px] w-[10px]" fill="none" stroke="#555" strokeWidth="1.700"><path d="M.8 6L5 1.500 9.200 6" /></svg>
        </div>
      ))}
      <button className="mb-[2px] ml-[54px] h-[30px] w-[90px] rounded-[3px] border border-[#a5a5a5] bg-white pb-[2px] text-black"><Fit w={59} className="text-[14.500px] font-semibold">Show all</Fit></button>
      <svg viewBox="0 0 10 10" className="ml-[13px] h-[10px] w-[10px]" stroke="#555" strokeWidth="2"><path d="M1 1l8 8M9 1L1 9" /></svg>
    </div>
  );
}

export default function App() {
  return (
    <div className="flex h-[768px] w-[1366px] flex-col overflow-hidden bg-white font-['Noto_Sans','Open_Sans',sans-serif]">
      <SystemBar />
      <div className="flex min-h-0 flex-1">
        <Launcher />
        <div className="flex min-w-0 flex-1 flex-col">
          <TabStrip />
          <AddressBar />
          <div className="flex min-h-0 flex-1">
            <div className="flex min-w-0 flex-1 flex-col">
              <EditorHeader />
              <div className="flex min-h-0 flex-1">
                <main className="flex min-w-0 flex-1 flex-col">
                  <FormatBar />
                  <Post />
                </main>
                <Settings />
              </div>
            </div>
            <Scrollbar />
          </div>
          <Downloads />
        </div>
      </div>
    </div>
  );
}
